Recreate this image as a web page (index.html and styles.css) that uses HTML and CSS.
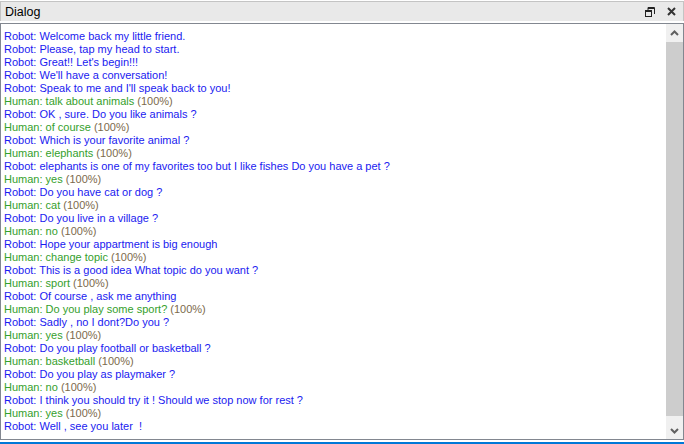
FILE: index.html
```html
<!DOCTYPE html>
<html>
<head>
<meta charset="utf-8">
<link rel="stylesheet" href="styles.css">
</head>
<body>
<div class="panel">
  <div class="titlebar">
    <span class="title">Dialog</span>
    <div class="tools">
      <svg class="ico" width="10" height="10" viewBox="0 0 10 10"><path d="M3 0.5h6.5v6.5M3 1.5h6.5" fill="none" stroke="#222" stroke-width="1"/><rect x="0.5" y="3.5" width="6" height="6" fill="none" stroke="#222"/><path d="M0.5 4.5h6" stroke="#222"/><path d="M3 0.5v3" stroke="#222"/></svg>
      <svg class="ico" width="9" height="9" viewBox="0 0 9 9"><path d="M1 1L8 8M8 1L1 8" stroke="#333" stroke-width="2"/></svg>
    </div>
  </div>
  <div class="box">
    <div class="log">
      <div class="r">Robot: Welcome back my little friend.</div>
      <div class="r">Robot: Please, tap my head to start.</div>
      <div class="r">Robot: Great!! Let's begin!!!</div>
      <div class="r">Robot: We'll have a conversation!</div>
      <div class="r">Robot: Speak to me and I'll speak back to you!</div>
      <div class="h">Human: talk about animals <span class="p">(100%)</span></div>
      <div class="r">Robot: OK , sure. Do you like animals ?</div>
      <div class="h">Human: of course <span class="p">(100%)</span></div>
      <div class="r">Robot: Which is your favorite animal ?</div>
      <div class="h">Human: elephants <span class="p">(100%)</span></div>
      <div class="r">Robot: elephants is one of my favorites too but I like fishes Do you have a pet ?</div>
      <div class="h">Human: yes <span class="p">(100%)</span></div>
      <div class="r">Robot: Do you have cat or dog ?</div>
      <div class="h">Human: cat <span class="p">(100%)</span></div>
      <div class="r">Robot: Do you live in a village ?</div>
      <div class="h">Human: no <span class="p">(100%)</span></div>
      <div class="r">Robot: Hope your appartment is big enough</div>
      <div class="h">Human: change topic <span class="p">(100%)</span></div>
      <div class="r">Robot: This is a good idea What topic do you want ?</div>
      <div class="h">Human: sport <span class="p">(100%)</span></div>
      <div class="r">Robot: Of course , ask me anything</div>
      <div class="h">Human: Do you play some sport? <span class="p">(100%)</span></div>
      <div class="r">Robot: Sadly , no I dont?Do you ?</div>
      <div class="h">Human: yes <span class="p">(100%)</span></div>
      <div class="r">Robot: Do you play football or basketball ?</div>
      <div class="h">Human: basketball <span class="p">(100%)</span></div>
      <div class="r">Robot: Do you play as playmaker ?</div>
      <div class="h">Human: no <span class="p">(100%)</span></div>
      <div class="r">Robot: I think you should try it ! Should we stop now for rest ?</div>
      <div class="h">Human: yes <span class="p">(100%)</span></div>
      <div class="r">Robot: Well , see you later  !</div>
    </div>
    <div class="scroll">
      <div class="arrow"><svg width="9" height="6" viewBox="0 0 9 6"><path d="M1 5L4.5 1.5L8 5" fill="none" stroke="#606060" stroke-width="2"/></svg></div>
      <div class="track"><div class="thumb"></div></div>
      <div class="arrow"><svg width="9" height="6" viewBox="0 0 9 6"><path d="M1 1L4.5 4.5L8 1" fill="none" stroke="#606060" stroke-width="2"/></svg></div>
    </div>
  </div>
  <div class="focus"></div>
</div>
</body>
</html>
```

FILE: styles.css
```css
html, body {
  margin: 0;
  padding: 0;
  background: #ffffff;
}
.panel {
  width: 684px;
  height: 444px;
  display: flex;
  flex-direction: column;
  background: #ffffff;
}
.titlebar {
  border-top: 1px solid #c4c4c4;
  border-left: 1px solid #c4c4c4;
  border-right: 1px solid #c4c4c4;
  background: #e9e9e9;
  display: flex;
  align-items: center;
  justify-content: space-between;
  padding: 0 7px 0 4px;
  box-sizing: border-box;
  margin-top: 1px;
  height: 20px;
}
.title {
  font-family: "Liberation Sans", Arial, sans-serif;
  font-size: 12.5px;
  color: #000;
}
.tools {
  display: flex;
  align-items: center;
  gap: 12px;
}
.ico { display: block; }
.box {
  margin-top: 2px;
  height: 417px;
  border: 1px solid #828790;
  display: flex;
  box-sizing: border-box;
}
.log {
  flex: 1;
  padding: 6px 0 0 3px;
  font-family: "Liberation Sans", Arial, sans-serif;
  font-size: 11px;
  line-height: 13px;
  overflow: hidden;
}
.r, .h { white-space: pre; }
.r { color: #1a1af0; }
.h { color: #34a02c; }
.p { color: #7c6a4c; }
.scroll {
  width: 17px;
  background: #f0f0f0;
  display: flex;
  flex-direction: column;
}
.arrow {
  height: 17px;
  display: flex;
  align-items: center;
  justify-content: center;
}
.track {
  flex: 1;
  padding: 1px 0 6px 0;
  display: flex;
}
.thumb {
  flex: 1;
  background: #cdcdcd;
}
.focus {
  margin-top: 2px;
  height: 2px;
  background: #0078d7;
}
```
